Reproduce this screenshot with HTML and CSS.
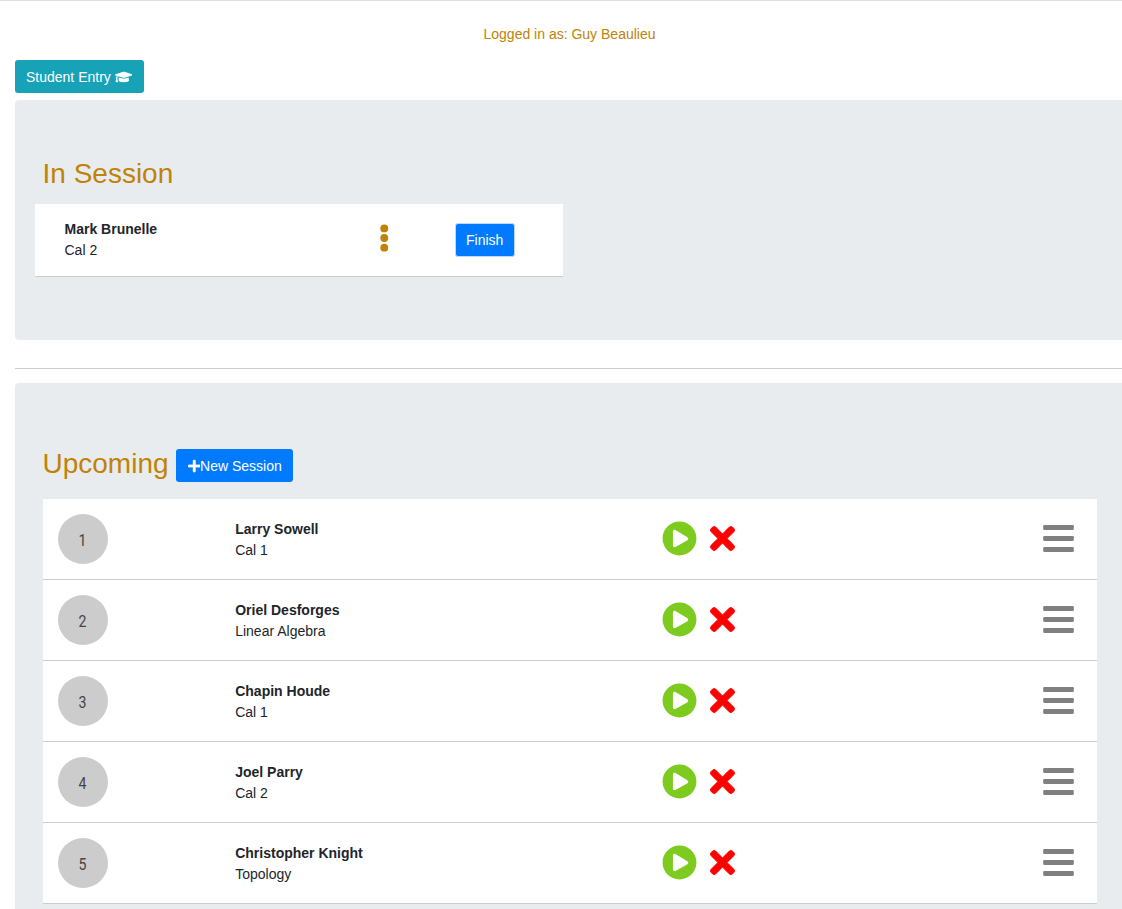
FILE: index.html
```
<!DOCTYPE html>
<html lang="en">
<head>
<meta charset="utf-8">
<title>Sessions</title>
<link rel="stylesheet" href="styles.css">
</head>
<body>
<svg class="sprite" aria-hidden="true">
  <symbol id="cap" viewBox="0 0 640 512"><path d="M622.34 153.2L343.4 67.5c-15.2-4.67-31.6-4.67-46.79 0L17.66 153.2c-23.54 7.23-23.54 38.36 0 45.59l48.63 14.94c-10.67 13.19-17.23 29.28-17.88 46.9C38.78 266.15 32 276.11 32 288c0 10.78 5.68 19.85 13.86 25.65L20.33 428.53C18.11 438.52 25.71 448 35.94 448h56.11c10.24 0 17.84-9.48 15.62-19.47L82.14 313.65C90.32 307.85 96 298.78 96 288c0-11.57-6.47-21.25-15.66-26.87.76-15.02 8.44-28.3 20.69-36.72L296.6 284.5c9.06 2.78 26.44 6.25 46.79 0l278.95-85.7c23.55-7.24 23.55-38.36 0-45.6zM352.79 315.09c-28.53 8.76-52.84 3.92-65.59 0l-145.02-44.55L128 384c0 35.35 85.96 64 192 64s192-28.65 192-64l-14.18-113.47-145.03 44.56z"/></symbol>
  <symbol id="plus" viewBox="0 0 448 512"><path d="M416 208H272V64c0-17.67-14.33-32-32-32h-32c-17.67 0-32 14.33-32 32v144H32c-17.67 0-32 14.33-32 32v32c0 17.67 14.33 32 32 32h144v144c0 17.67 14.33 32 32 32h32c17.67 0 32-14.33 32-32V304h144c17.67 0 32-14.33 32-32v-32c0-17.67-14.33-32-32-32z"/></symbol>
  <symbol id="dots" viewBox="0 0 192 512"><circle cx="96" cy="80" r="72"/><circle cx="96" cy="256" r="72"/><circle cx="96" cy="432" r="72"/></symbol>
  <symbol id="play" viewBox="0 0 512 512"><path d="M256 8C119 8 8 119 8 256s111 248 248 248 248-111 248-248S393 8 256 8zm115.7 272l-176 101c-15.8 8.8-35.7-2.5-35.7-21V152c0-18.4 19.8-29.8 35.7-21l176 107c16.4 9.2 16.4 32.9 0 42z"/></symbol>
  <symbol id="times" viewBox="0 0 352 512"><path d="M242.72 256l100.07-100.07c12.28-12.28 12.28-32.19 0-44.48l-22.24-22.24c-12.28-12.28-32.19-12.28-44.48 0L176 189.28 75.93 89.21c-12.28-12.28-32.19-12.28-44.48 0L9.21 111.45c-12.28 12.28-12.28 32.19 0 44.48L109.28 256 9.21 356.07c-12.28 12.28-12.28 32.19 0 44.48l22.24 22.24c12.28 12.28 32.2 12.28 44.48 0L176 322.72l100.07 100.07c12.28 12.28 32.2 12.28 44.48 0l22.24-22.24c12.28-12.28 12.28-32.19 0-44.48L242.72 256z"/></symbol>
  <symbol id="bars" viewBox="0 0 448 512"><rect y="60" width="448" height="72" rx="16"/><rect y="220" width="448" height="72" rx="16"/><rect y="380" width="448" height="72" rx="16"/></symbol>
</svg>
<div class="page">
  <p class="login">Logged in as: Guy Beaulieu</p>
  <button class="btn btn-info">Student Entry <svg class="i-cap"><use href="#cap"/></svg></button>
  <section class="panel panel-session">
    <h3 class="title">In Session</h3>
    <div class="current">
      <div class="who"><b>Mark Brunelle</b><span>Cal 2</span></div>
      <svg class="i-dots"><use href="#dots"/></svg>
      <button class="btn btn-finish">Finish</button>
    </div>
  </section>
  <hr class="rule">
  <section class="panel panel-upcoming">
    <div class="head">
      <h3 class="title">Upcoming</h3>
      <button class="btn btn-new"><svg class="i-plus"><use href="#plus"/></svg>New Session</button>
    </div>
    <div class="list">
      <div class="row"><span class="num"><i>1</i></span><div class="who"><b>Larry Sowell</b><span>Cal 1</span></div><svg class="i-play"><use href="#play"/></svg><svg class="i-times"><use href="#times"/></svg><svg class="i-bars"><use href="#bars"/></svg></div>
      <div class="row"><span class="num"><i>2</i></span><div class="who"><b>Oriel Desforges</b><span>Linear Algebra</span></div><svg class="i-play"><use href="#play"/></svg><svg class="i-times"><use href="#times"/></svg><svg class="i-bars"><use href="#bars"/></svg></div>
      <div class="row"><span class="num"><i>3</i></span><div class="who"><b>Chapin Houde</b><span>Cal 1</span></div><svg class="i-play"><use href="#play"/></svg><svg class="i-times"><use href="#times"/></svg><svg class="i-bars"><use href="#bars"/></svg></div>
      <div class="row"><span class="num"><i>4</i></span><div class="who"><b>Joel Parry</b><span>Cal 2</span></div><svg class="i-play"><use href="#play"/></svg><svg class="i-times"><use href="#times"/></svg><svg class="i-bars"><use href="#bars"/></svg></div>
      <div class="row"><span class="num"><i>5</i></span><div class="who"><b>Christopher Knight</b><span>Topology</span></div><svg class="i-play"><use href="#play"/></svg><svg class="i-times"><use href="#times"/></svg><svg class="i-bars"><use href="#bars"/></svg></div>
    </div>
  </section>
</div>
</body>
</html>
```
FILE: styles.css
```
* { box-sizing: border-box; }
body {
  margin: 0;
  height: 909px;
  overflow: hidden;
  font: 14px/21px "Liberation Sans", Arial, sans-serif;
  color: #212529;
  background: #fff;
}
.sprite { display: none; }
svg { fill: currentColor; flex: none; }
.page {
  height: 909px;
  overflow: hidden;
  border-top: 1px solid #dee2e6;
  padding-left: 15px;
}
.login {
  margin: 23px 0 15px;
  width: 1109px;
  text-align: center;
  color: #c08306;
}
.btn {
  display: flex;
  align-items: center;
  height: 33px;
  padding: 2px 11px 0;
  border: 0;
  border-radius: 3px;
  font: inherit;
  color: #fff;
  white-space: pre;
}
.btn svg { margin-bottom: 2px; }
.btn-info { width: 129px; background: #17a2b8; }
.btn-new { width: 117px; padding: 2px 0 0 12px; background: #007bff; }
.btn-finish { background: #007bff; border: 1px solid #b8daff; padding: 0 10px; width: 60px; height: 34px; }
.i-cap { width: 17.5px; height: 14px; }
.i-plus { width: 12.5px; height: 14px; stroke: currentColor; stroke-width: 10px; }
.panel { background: #e9ecef; border-radius: 4px; margin-right: -10px; }
.panel-session { height: 240px; margin-top: 7px; padding: 57px 0 0 20px; }
.title { margin: 0; font-size: 28px; line-height: 34px; font-weight: 400; color: #c08306; }
.panel-session .title { padding-left: 7.5px; }
.current {
  display: flex;
  align-items: center;
  width: 528px;
  height: 73px;
  margin-top: 13px;
  padding-left: 29.5px;
  background: #fff;
  border-bottom: 1px solid #ccc;
}
.who { display: flex; flex-direction: column; }
.current .who { width: 314px; }
.i-dots { width: 10.5px; height: 28px; margin-right: 66px; margin-bottom: 4px; color: #c08306; }
.rule { margin: 28px 0 14px; border: 0; border-top: 1px solid #ccc; }
.panel-upcoming { height: 700px; padding: 64px 0 0 28px; }
.head { display: flex; align-items: flex-start; gap: 7px; height: 52px; padding-top: 2px; }
.head .title { margin-left: -.5px; margin-top: -2px; }
.list { width: 1054px; background: #fff; }
.row {
  display: flex;
  align-items: center;
  height: 81px;
  padding: 0 23px 0 15px;
  border-bottom: 1px solid #ccc;
}
.row svg { margin-bottom: 1px; }
.num {
  width: 50px;
  height: 50px;
  padding-right: 1px;
  border-radius: 50%;
  background: #ccc;
  color: #444;
  font: 16px/54px Roboto, sans-serif;
  text-align: center;
}
.num i { display: inline-block; font-style: normal; transform: scaleX(.88); }
.row .who { width: 426.8px; margin-left: 127.2px; padding-top: 2px; }
.i-play { width: 35px; height: 35px; color: #7ecb20; }
.i-times { width: 25px; height: 35px; margin-left: 13px; color: #f00; overflow: visible; stroke: currentColor; stroke-width: 14px; }
.i-bars { width: 31px; height: 35px; margin-left: auto; color: gray; }
```
